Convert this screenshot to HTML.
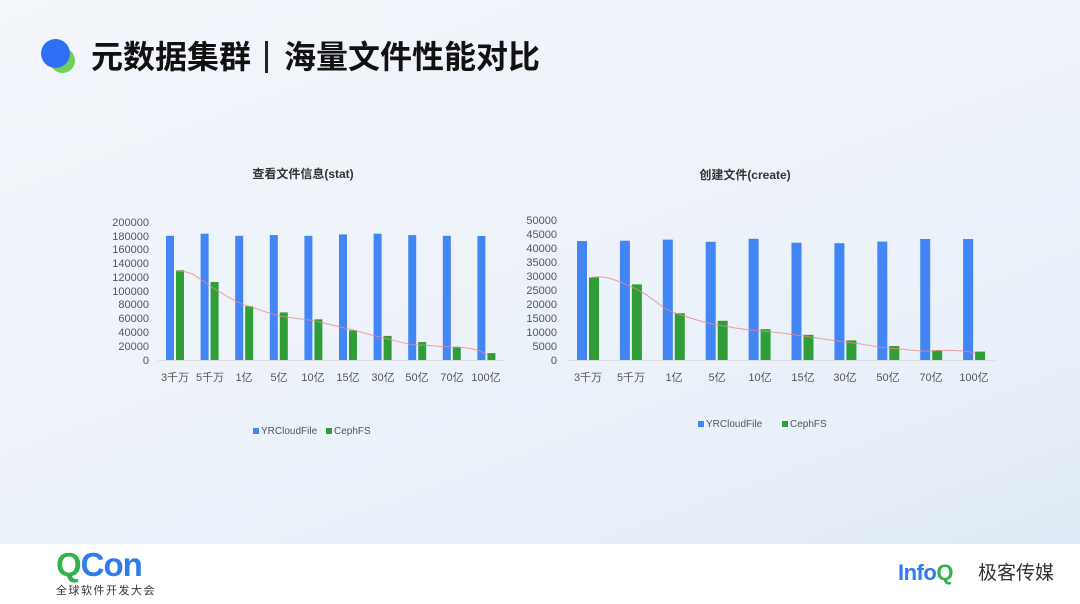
<!DOCTYPE html>
<html><head><meta charset="utf-8"><style>
body{margin:0;width:1080px;height:604px;overflow:hidden;font-family:"Liberation Sans","Noto Sans CJK SC",sans-serif;}
.bg{position:absolute;left:0;top:0;width:1080px;height:544px;background:linear-gradient(160deg,#f3f6fb 0%,#eef3fa 45%,#e9f0f9 75%,#dfeaf6 100%);}
.foot{position:absolute;left:0;top:544px;width:1080px;height:60px;background:#fff;}
</style></head><body>
<div class="bg"></div>
<div style="position:absolute;left:50px;top:48px;width:25px;height:25px;border-radius:50%;background:#6fcf5a;"></div>
<div style="position:absolute;left:41px;top:39px;width:29px;height:29px;border-radius:50%;background:#2f6ff5;"></div>
<div style="position:absolute;left:91px;top:37px;font-size:32px;font-weight:bold;color:#111;line-height:40px;white-space:nowrap;">元数据集群<span style="display:inline-block;width:3px;height:32px;background:#222;margin:0 16px 0 14px;vertical-align:-5px;"></span>海量文件性能对比</div>
<svg width="1080" height="544" style="position:absolute;left:0;top:0" font-family="Liberation Sans, Noto Sans CJK SC, sans-serif">
<text x="303" y="178" font-size="12" text-anchor="middle" fill="#333" font-weight="bold">查看文件信息(stat)</text>
<text x="745" y="179" font-size="12" text-anchor="middle" fill="#333" font-weight="bold">创建文件(create)</text>
<g font-size="11" fill="#555" text-anchor="end">
<text x="149" y="226">200000</text><text x="149" y="240">180000</text><text x="149" y="253">160000</text><text x="149" y="267">140000</text><text x="149" y="281">120000</text><text x="149" y="295">100000</text><text x="149" y="308">80000</text><text x="149" y="322">60000</text><text x="149" y="336">40000</text><text x="149" y="350">20000</text><text x="149" y="364">0</text>
<text x="557" y="224">50000</text><text x="557" y="238">45000</text><text x="557" y="252">40000</text><text x="557" y="266">35000</text><text x="557" y="280">30000</text><text x="557" y="294">25000</text><text x="557" y="308">20000</text><text x="557" y="322">15000</text><text x="557" y="336">10000</text><text x="557" y="350">5000</text><text x="557" y="364">0</text>
</g>
<line x1="158" y1="360.5" x2="504" y2="360.5" stroke="#ddd"/>
<line x1="567" y1="360.5" x2="995" y2="360.5" stroke="#ddd"/>
<g fill="#4285f4">
<rect x="166" y="235.8" width="8" height="124.2"/><rect x="200.6" y="233.7" width="8" height="126.3"/><rect x="235.2" y="235.8" width="8" height="124.2"/><rect x="269.8" y="235.1" width="8" height="124.9"/><rect x="304.4" y="235.8" width="8" height="124.2"/><rect x="339" y="234.4" width="8" height="125.6"/><rect x="373.6" y="233.7" width="8" height="126.3"/><rect x="408.2" y="235.1" width="8" height="124.9"/><rect x="442.8" y="235.8" width="8" height="124.2"/><rect x="477.4" y="236" width="8" height="124"/>
<rect x="577" y="241" width="10" height="119"/><rect x="619.9" y="240.7" width="10" height="119.3"/><rect x="662.8" y="239.6" width="10" height="120.4"/><rect x="705.7" y="241.8" width="10" height="118.2"/><rect x="748.6" y="238.8" width="10" height="121.2"/><rect x="791.5" y="242.7" width="10" height="117.3"/><rect x="834.4" y="243.2" width="10" height="116.8"/><rect x="877.3" y="241.6" width="10" height="118.4"/><rect x="920.2" y="239" width="10" height="121"/><rect x="963.1" y="239" width="10" height="121"/>
</g>
<g fill="#2f9e37">
<rect x="176" y="270.3" width="8" height="89.7"/><rect x="210.6" y="282" width="8" height="78"/><rect x="245.2" y="306.2" width="8" height="53.8"/><rect x="279.8" y="312.4" width="8" height="47.6"/><rect x="314.4" y="319.3" width="8" height="40.7"/><rect x="349" y="330.3" width="8" height="29.7"/><rect x="383.6" y="335.9" width="8" height="24.1"/><rect x="418.2" y="342.1" width="8" height="17.9"/><rect x="452.8" y="346.9" width="8" height="13.1"/><rect x="487.4" y="353.1" width="8" height="6.9"/>
<rect x="589" y="277.4" width="10" height="82.6"/><rect x="631.9" y="284.4" width="10" height="75.6"/><rect x="674.8" y="313.2" width="10" height="46.8"/><rect x="717.7" y="320.8" width="10" height="39.2"/><rect x="760.6" y="329.2" width="10" height="30.8"/><rect x="803.5" y="334.8" width="10" height="25.2"/><rect x="846.4" y="340.4" width="10" height="19.6"/><rect x="889.3" y="346" width="10" height="14"/><rect x="932.2" y="350.2" width="10" height="9.8"/><rect x="975.1" y="351.6" width="10" height="8.4"/>
</g>
<path d="M176 271 C195 271 200 280 210 286 S235 302 245 305 S270 314 280 316 S305 319 315 321 S340 327 349 329 S374 336 384 338 S408 345 418 345 S440 347 452 347 S480 349 487 355" fill="none" stroke="#e88a8a" stroke-width="1" opacity="0.8"/>
<path d="M589 278 C600 275 610 277 632 287 S660 308 675 313 S705 323 718 325 S745 330 761 331 S790 334 804 336 S835 341 846 342 S875 347 889 348 S920 352 932 351 S965 350 975 353" fill="none" stroke="#e88a8a" stroke-width="1" opacity="0.8"/>
<g font-size="11" fill="#555" text-anchor="middle">
<text x="175" y="381">3千万</text><text x="210" y="381">5千万</text><text x="244" y="381">1亿</text><text x="279" y="381">5亿</text><text x="313" y="381">10亿</text><text x="348" y="381">15亿</text><text x="383" y="381">30亿</text><text x="417" y="381">50亿</text><text x="452" y="381">70亿</text><text x="486" y="381">100亿</text>
<text x="588" y="381">3千万</text><text x="631" y="381">5千万</text><text x="674" y="381">1亿</text><text x="717" y="381">5亿</text><text x="760" y="381">10亿</text><text x="803" y="381">15亿</text><text x="845" y="381">30亿</text><text x="888" y="381">50亿</text><text x="931" y="381">70亿</text><text x="974" y="381">100亿</text>
</g>
<g font-size="10" fill="#555">
<rect x="253" y="428" width="6" height="6" fill="#4285f4"/><text x="261" y="434">YRCloudFile</text>
<rect x="326" y="428" width="6" height="6" fill="#2f9e37"/><text x="334" y="434">CephFS</text>
<rect x="698" y="421" width="6" height="6" fill="#4285f4"/><text x="706" y="427">YRCloudFile</text>
<rect x="782" y="421" width="6" height="6" fill="#2f9e37"/><text x="790" y="427">CephFS</text>
</g>
</svg>
<div class="foot"></div>
<div style="position:absolute;left:56px;top:546px;font-size:33px;font-weight:bold;line-height:38px;letter-spacing:-1px;"><span style="color:#2fb34a">Q</span><span style="color:#2f7cf0">Con</span></div>
<div style="position:absolute;left:56px;top:584px;font-size:11px;color:#333;letter-spacing:1.5px;line-height:14px;">全球软件开发大会</div>
<div style="position:absolute;left:898px;top:560px;font-size:22px;font-weight:bold;line-height:26px;color:#2f7cf0;letter-spacing:-0.5px;">Info<span style="color:#2fb34a">Q</span></div>
<div style="position:absolute;left:978px;top:562px;font-size:19px;color:#333;line-height:24px;">极客传媒</div>
</body></html>
